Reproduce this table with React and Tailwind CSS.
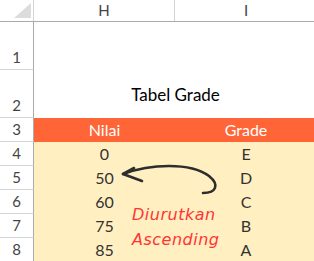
const rows = [
  { n: 1, h: 'h-[48px]' },
  { n: 2, h: 'h-[48px]', title: 'Tabel Grade' },
  { n: 3, h: 'h-[24px]', head: ['Nilai', 'Grade'] },
  { n: 4, h: 'h-[24px]', data: ['0', 'E'] },
  { n: 5, h: 'h-[24px]', data: ['50', 'D'] },
  { n: 6, h: 'h-[24px]', data: ['60', 'C'] },
  { n: 7, h: 'h-[24px]', data: ['75', 'B'] },
  { n: 8, h: 'h-[24px]', data: ['85', 'A'] },
];

function Cell({ children, className = '' }) {
  return <div className={`flex items-end justify-center pb-[2px] leading-[20px] ${className}`}>{children}</div>;
}

export default function App() {
  return (
    <div className="relative h-[261px] w-[314px] overflow-hidden bg-white font-['Lato',sans-serif] text-[15px]">
      {/* column headers */}
      <div className="flex h-[22px] border-b border-[#ababab]">
        <div className="flex w-[34px] shrink-0 items-start justify-start border-r border-[#d4d4d4] pl-[14px] pt-[3px]">
          <svg width="17" height="15" viewBox="0 0 17 15">
            <polygon points="17,0 17,15 0,15" fill="#dcdcdc" />
          </svg>
        </div>
        <div className="flex w-[141px] shrink-0 items-center justify-center border-r border-[#d4d4d4] text-[#444]">H</div>
        <div className="flex w-[142px] shrink-0 items-center justify-center text-[#444]">I</div>
      </div>

      {rows.map((r) => (
        <div key={r.n} className="flex">
          <Cell className={`w-[34px] shrink-0 border-r border-b border-r-[#ababab] border-b-[#d4d4d4] text-[#444] ${r.h}`}>{r.n}</Cell>
          {r.title && (
            <div className={`flex w-[283px] shrink-0 items-center justify-center pt-[1px] text-[17px] text-black ${r.h}`}>{r.title}</div>
          )}
          {r.head && (
            <div className={`flex w-[283px] shrink-0 bg-[#ff6536] text-[16px] text-white ${r.h}`}>
              <Cell className="w-[141px]">{r.head[0]}</Cell>
              <Cell className="w-[142px]">{r.head[1]}</Cell>
            </div>
          )}
          {r.data && (
            <div className={`flex w-[283px] shrink-0 bg-[#ffefc1] text-[16px] text-[#333] ${r.h}`}>
              <Cell className="w-[141px]">{r.data[0]}</Cell>
              <Cell className="w-[142px]">{r.data[1]}</Cell>
            </div>
          )}
        </div>
      ))}

      {/* annotation arrow */}
      <svg className="absolute left-0 top-0" width="314" height="261" viewBox="0 0 314 261" fill="none">
        <path d="M123 174 C150 164 190 162 209 176 C220 185 216 193 203 193" stroke="#2d2d2d" strokeWidth="2.6" strokeLinecap="round" />
        <path d="M134 168 L123 174 L142 181" stroke="#2d2d2d" strokeWidth="2.6" strokeLinecap="round" strokeLinejoin="round" />
      </svg>
      <div className="absolute left-[132px] top-[202px] font-['DejaVu_Sans',sans-serif] text-[16px] italic leading-[25px] tracking-[0.5px] text-[#ff3434]">
        <div>Diurutkan</div>
        <div>Ascending</div>
      </div>
    </div>
  );
}
